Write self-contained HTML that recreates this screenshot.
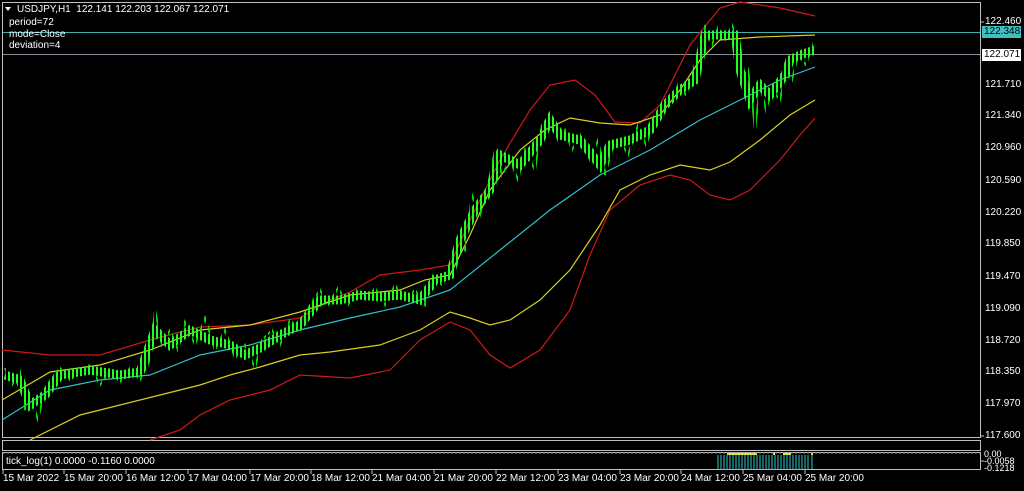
<!DOCTYPE html>
<html><head><meta charset="utf-8"><style>
html,body{margin:0;padding:0;background:#000;width:1024px;height:491px;overflow:hidden;font-family:"Liberation Sans",sans-serif;}
.t{position:absolute;color:#fff;font-size:10px;white-space:nowrap;}
</style></head><body>
<svg width="1024" height="491" style="position:absolute;left:0;top:0">
<defs>
<pattern id="st" width="4" height="10" patternUnits="userSpaceOnUse"><rect x="0" y="0" width="2" height="10" fill="#fff"/></pattern>
<mask id="m"><rect x="0" y="0" width="1024" height="440" fill="url(#st)"/></mask>
</defs>
<rect x="2.5" y="2.5" width="978" height="435" fill="none" stroke="#c0c0c0"/>
<rect x="2.5" y="440.5" width="978" height="10" fill="none" stroke="#c0c0c0"/>
<rect x="2.5" y="452.5" width="978" height="17" fill="none" stroke="#c0c0c0"/>
<line x1="3" y1="453" x2="980" y2="453" stroke="#808080" stroke-dasharray="2,2"/>
<line x1="3" y1="32.5" x2="980" y2="32.5" stroke="#3fb0b0"/>
<line x1="3" y1="54.5" x2="980" y2="54.5" stroke="#8a8a9a"/>
<g fill="none" stroke-width="1.2">
<polyline stroke="#d01818" points="2,350 50,355 100,355 150,340 200,327 250,325 300,318 330,300 350,292 380,275 420,270 450,265 470,220 500,160 530,110 550,85 575,80 595,95 615,122 640,123 660,105 690,45 720,8 740,2 780,8 815,16"/>
<polyline stroke="#d01818" points="150,440 180,430 200,415 230,400 270,390 300,375 350,378 390,370 420,340 450,322 470,330 490,355 510,368 540,350 570,310 590,255 610,210 640,185 670,175 690,180 710,195 730,200 750,190 780,160 800,135 815,118"/>
<polyline stroke="#d8d020" points="2,400 50,372 100,365 150,350 200,330 250,325 300,312 350,295 400,290 425,280 450,275 470,235 490,190 520,150 545,130 570,118 600,123 630,125 660,115 680,90 700,60 720,40 760,37 815,35"/>
<polyline stroke="#d8d020" points="30,440 80,415 120,405 160,395 200,385 230,375 260,367 300,355 330,352 380,345 420,330 450,312 470,318 490,325 510,320 540,300 570,270 600,225 620,190 650,175 680,165 710,170 730,162 760,140 790,115 815,100"/>
<polyline stroke="#30c0c8" points="2,420 50,390 100,380 150,375 200,355 250,345 300,330 350,318 400,307 450,290 500,250 550,210 600,175 650,150 700,120 750,95 780,80 815,67"/>
</g>
<g mask="url(#m)">
<polyline fill="none" stroke="#00e000" stroke-width="2" points="5,368 12,385 20,372 25,410 30,395 38,420 45,388 52,378 60,368 70,380 80,372 90,365 100,385 110,370 120,382 130,368 140,380 150,360 155,310 162,345 170,330 178,350 185,322 195,345 205,318 215,350 225,330 235,358 245,345 255,368 262,340 272,330 280,345 290,320 300,330 310,305 320,290 328,305 338,288 348,305 356,290 366,300 375,288 385,305 395,285 405,300 415,290 425,305 432,275 442,285 450,270 458,240 465,250 472,195 480,215 488,185 495,150 502,175 510,160 518,180 525,150 535,170 542,125 550,115 558,140 565,130 572,150 580,135 590,160 598,140 605,175 612,150 620,140 628,155 638,125 646,145 655,120 663,100 670,105 678,85 686,95 694,70 700,55 705,25 712,45 718,28 726,40 732,25 738,40 742,80 748,70 752,100 755,130 760,85 766,110 772,90 780,100 786,70 792,80 798,55 806,65 812,45 815,55"/>
<polyline fill="none" stroke="#20ff20" stroke-width="9" points="5,375 20,380 30,405 45,395 60,375 90,370 120,375 140,372 155,330 170,345 190,330 210,340 230,345 245,355 260,348 280,335 300,325 320,300 340,300 360,295 380,297 400,295 420,300 435,280 450,275 460,240 475,210 490,190 500,155 520,165 540,140 550,120 560,135 580,140 600,165 610,145 630,140 650,130 665,105 680,90 695,80 705,35 720,35 735,35 740,70 750,100 760,85 770,95 785,75 790,60 800,55 815,50"/>
</g>
<g stroke="#30c8c8" stroke-width="1">
<path d="M718 455V470M721 455V470M724 455V470M727 455V470M730 455V470M733 455V470M736 455V470M739 455V470M742 455V470M745 455V470M748 455V470M751 455V470M754 455V470M757 455V470M760 455V470M763 455V470M766 455V470M769 455V470M772 455V470M775 455V470M778 455V470M781 455V470M784 455V470M787 455V470M790 455V470M793 455V470M796 455V470M799 455V470M802 455V470M805 455V470M808 455V470M812 455V470"/>
</g>
<g fill="#e0e040"><rect x="727" y="453" width="30" height="2"/><rect x="773" y="453" width="2" height="2"/><rect x="783" y="453" width="8" height="2"/><rect x="811" y="453" width="2" height="2"/></g>
<g stroke="#c0c0c0"><path d="M981 22h3M981 436h3M981 461h3M3 470v4M64 470v4M126 470v4M188 470v4M250 470v4M311 470v4M372 470v4M434 470v4M496 470v4M558 470v4M620 470v4M681 470v4M743 470v4M805 470v4"/></g>
<path d="M5 7h6l-3 4z" fill="#fff"/>
<rect x="982" y="26" width="39" height="12" fill="#3fc0c0"/>
<rect x="982" y="49" width="39" height="12" fill="#fff"/>
</svg>
<div class="t" style="left:17px;top:4px">USDJPY,H1&nbsp; 122.141 122.203 122.067 122.071</div>
<div class="t" style="left:9px;top:17px">period=72</div>
<div class="t" style="left:9px;top:29px">mode=Close</div>
<div class="t" style="left:9px;top:40px">deviation=4</div>
<div class="t" style="left:6px;top:456px">tick_log(1) 0.0000 -0.1160 0.0000</div>
<div class="t" style="left:985px;top:16px">122.460</div>
<div class="t" style="left:984px;top:26px;color:#000">122.348</div>
<div class="t" style="left:984px;top:49px;color:#000">122.071</div>
<div class="t" style="left:985px;top:79px">121.710</div>
<div class="t" style="left:985px;top:110px">121.340</div>
<div class="t" style="left:985px;top:142px">120.960</div>
<div class="t" style="left:985px;top:175px">120.590</div>
<div class="t" style="left:985px;top:207px">120.220</div>
<div class="t" style="left:985px;top:238px">119.850</div>
<div class="t" style="left:985px;top:271px">119.470</div>
<div class="t" style="left:985px;top:303px">119.090</div>
<div class="t" style="left:985px;top:335px">118.720</div>
<div class="t" style="left:985px;top:366px">118.350</div>
<div class="t" style="left:985px;top:398px">117.970</div>
<div class="t" style="left:985px;top:430px">117.600</div>
<div class="t" style="left:984px;top:451px;font-size:9px;line-height:7px">0.00<br>-0.0058<br>-0.1218</div>
<div class="t" style="left:3px;top:473px">15 Mar 2022</div>
<div class="t" style="left:64px;top:473px">15 Mar 20:00</div>
<div class="t" style="left:126px;top:473px">16 Mar 12:00</div>
<div class="t" style="left:188px;top:473px">17 Mar 04:00</div>
<div class="t" style="left:250px;top:473px">17 Mar 20:00</div>
<div class="t" style="left:311px;top:473px">18 Mar 12:00</div>
<div class="t" style="left:372px;top:473px">21 Mar 04:00</div>
<div class="t" style="left:434px;top:473px">21 Mar 20:00</div>
<div class="t" style="left:496px;top:473px">22 Mar 12:00</div>
<div class="t" style="left:558px;top:473px">23 Mar 04:00</div>
<div class="t" style="left:620px;top:473px">23 Mar 20:00</div>
<div class="t" style="left:681px;top:473px">24 Mar 12:00</div>
<div class="t" style="left:743px;top:473px">25 Mar 04:00</div>
<div class="t" style="left:805px;top:473px">25 Mar 20:00</div>
</body></html>
